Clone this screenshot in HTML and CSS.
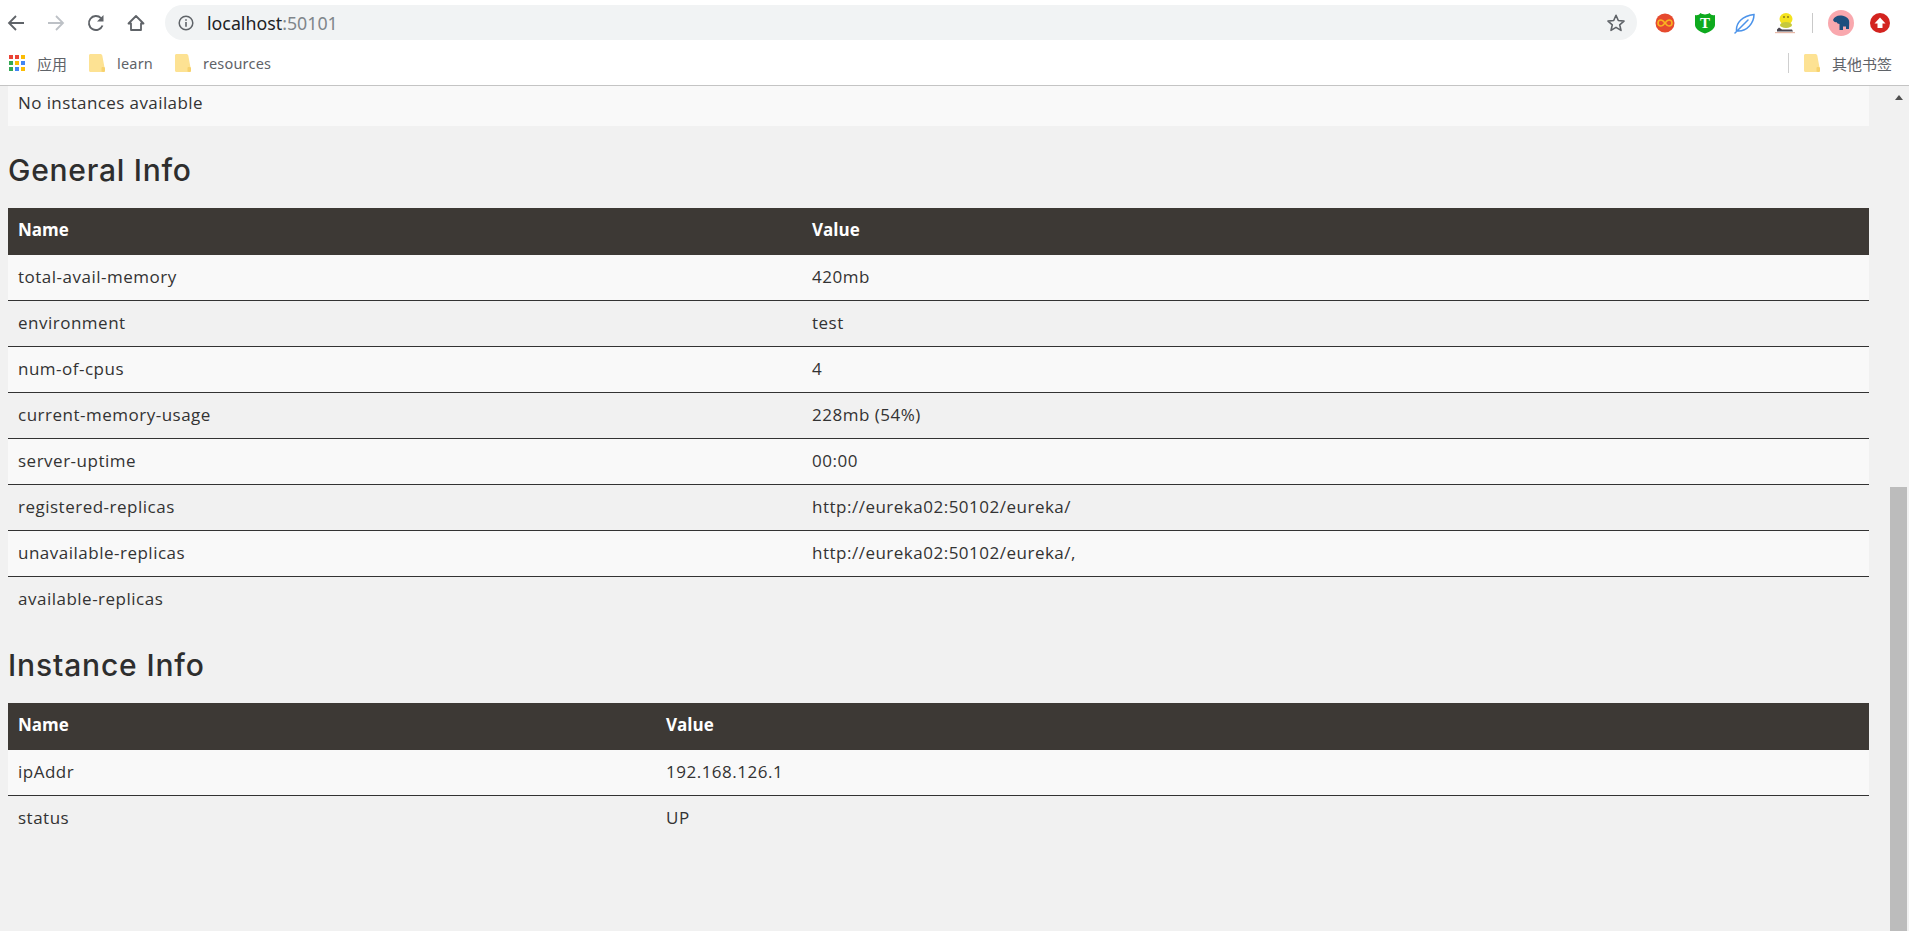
FILE: index.html
```html
<!DOCTYPE html>
<html lang="en">
<head>
<meta charset="utf-8">
<title>Eureka</title>
<link rel="stylesheet" href="styles.css">
</head>
<body>
<svg class="defs" width="0" height="0" aria-hidden="true">
  <symbol id="folder" viewBox="0 0 16 18">
    <path d="M1.500 0H11c1.500 0 2 .6 2.300 1.500L15.500 13.500c.3 1.500.5 2 .5 3s-.7 1.500-2 1.500H1.500C.6 18 0 17.400 0 16.500V1.500C0 .6.6 0 1.500 0Z" fill="#fde293"/>
    <path d="M12.500 17.500v-3.500c0-.8 1-1.200 1.800-1l1.700.5v3c0 1-.7 1.500-2 1.500Z" fill="#f7d26e"/>
  </symbol>
</svg>
<header class="chrome">
  <div class="toolbar">
    <button class="nav"><svg width="20" height="20" viewBox="0 0 20 20"><path d="M18 10H3M10 3l-7 7 7 7" fill="none" stroke="#5f6368" stroke-width="1.800"/></svg></button>
    <button class="nav"><svg width="20" height="20" viewBox="0 0 20 20"><path d="M2 10h15M10 3l7 7-7 7" fill="none" stroke="#bdc1c6" stroke-width="1.800"/></svg></button>
    <button class="nav"><svg width="20" height="20" viewBox="0 0 20 20"><path d="M16.500 12.500A7 7 0 1 1 15 5.200" fill="none" stroke="#5f6368" stroke-width="1.900"/><path d="M17.500 2v6.500H11Z" fill="#5f6368"/></svg></button>
    <button class="nav"><svg width="20" height="20" viewBox="0 0 20 20"><path d="M10 3 2.500 10.500H5V17h10v-6.500h2.500Z" fill="none" stroke="#5f6368" stroke-width="1.800" stroke-linejoin="round"/></svg></button>
    <div class="omnibox">
      <svg class="info" width="16" height="16" viewBox="0 0 16 16"><circle cx="8" cy="8" r="6.800" fill="none" stroke="#5f6368" stroke-width="1.500"/><path d="M7.200 7h1.600v4.800H7.200ZM7.200 4.200h1.600v1.600H7.200Z" fill="#5f6368"/></svg>
      <span class="url">localhost<span class="port">:50101</span></span>
      <svg class="star" width="20" height="20" viewBox="0 0 20 20"><path d="m10 2.300 2.300 5.200 5.700.6-4.300 3.700 1.300 5.600-5-3-5 3 1.300-5.600L2 8.100l5.700-.6Z" fill="none" stroke="#5f6368" stroke-width="1.600" stroke-linejoin="round"/></svg>
    </div>
    <div class="extensions">
      <span class="ext"><svg width="20" height="20" viewBox="0 0 20 20"><circle cx="10" cy="10" r="9.500" fill="#e64a2e"/><path d="M10 10c-1.500-2-2.600-3-4-3a3 3 0 0 0 0 6c1.400 0 2.500-1 4-3s2.600-3 4-3a3 3 0 0 1 0 6c-1.400 0-2.500-1-4-3Z" fill="none" stroke="#f9b320" stroke-width="1.600"/></svg></span>
      <span class="ext"><svg width="20" height="22" viewBox="0 0 20 22"><path d="M0 3c2.500.8 4-.2 5.500-2 1.500 1 2.800 1.400 4.500 1.400S13 2 14.500 1C16 2.800 17.500 3.800 20 3v10c0 3.500-4.500 7-10 8.500C4.500 20 0 16.500 0 13Z" fill="#0eaa1e"/><text class="shield-t" x="10" y="16" text-anchor="middle">T</text></svg></span>
      <span class="ext"><svg width="22" height="22" viewBox="0 0 22 22"><path d="M2.500 18.500C2 11 8 4 20 2.500 20 11 13 19 4.500 19ZM1 21 14 8" fill="none" stroke="#4b93ea" stroke-width="1.500" stroke-linecap="round"/></svg></span>
      <span class="ext"><svg width="22" height="24" viewBox="0 0 22 24"><ellipse cx="12" cy="8" rx="6.500" ry="6" fill="#f4e31f"/><ellipse cx="12" cy="14" rx="6" ry="3" fill="#c6c93c"/><path d="M3 18.500l2-2 3 2h10l1 2H3Z" fill="#4a4650"/><path d="M1 21h20v1.200H1Z" fill="#e6b8a8"/><circle cx="10" cy="6" r="1" fill="#8a7a20"/><circle cx="14" cy="6" r="1" fill="#8a7a20"/></svg></span>
      <span class="ext-sep"></span>
      <span class="ext avatar"><svg width="26" height="26" viewBox="0 0 26 26"><circle cx="13" cy="13" r="13" fill="#f9a8ae"/><path d="M5 10c1-3 4-4.500 7-4.500 4 0 8 1.500 9 5 .5 2 0 6 0 8.500h-3v-2.500h-3V20h-3.500v-6c-1.500 0-2.500-1-3-2-1 .5-2.500 0-3.500-2Z" fill="#1d4f7e"/></svg></span>
      <span class="ext"><svg width="20" height="20" viewBox="0 0 20 20"><circle cx="10" cy="10" r="10" fill="#d3231f"/><path d="M10 4.500 15.500 10.500H12.500V15h-5V10.500H4.500Z" fill="#fff"/></svg></span>
    </div>
  </div>
  <nav class="bookmarks">
    <svg class="apps" width="16" height="16" viewBox="0 0 16 16">
      <rect x="0" y="0" width="4" height="4" fill="#ea4335"/><rect x="6" y="0" width="4" height="4" fill="#ea4335"/><rect x="12" y="0" width="4" height="4" fill="#fbbc04"/>
      <rect x="0" y="6" width="4" height="4" fill="#34a853"/><rect x="6" y="6" width="4" height="4" fill="#fbbc04"/><rect x="12" y="6" width="4" height="4" fill="#4285f4"/>
      <rect x="0" y="12" width="4" height="4" fill="#34a853"/><rect x="6" y="12" width="4" height="4" fill="#4285f4"/><rect x="12" y="12" width="4" height="4" fill="#fbbc04"/>
    </svg>
    <span class="bm-label cjk">应用</span>
    <svg class="folder" width="16" height="18"><use href="#folder"/></svg>
    <span class="bm-label">learn</span>
    <svg class="folder" width="16" height="18"><use href="#folder"/></svg>
    <span class="bm-label">resources</span>
    <span class="bm-spacer"></span>
    <span class="bm-sep"></span>
    <svg class="folder other" width="16" height="18"><use href="#folder"/></svg>
    <span class="bm-label cjk">其他书签</span>
  </nav>
</header>
<div class="viewport">
  <main class="page">
    <div class="leftover">No instances available</div>
    <h1 class="title">General Info</h1>
    <table class="info-table general">
      <thead><tr><th class="name-col">Name</th><th>Value</th></tr></thead>
      <tbody>
        <tr><td>total-avail-memory</td><td>420mb</td></tr>
        <tr><td>environment</td><td>test</td></tr>
        <tr><td>num-of-cpus</td><td>4</td></tr>
        <tr><td>current-memory-usage</td><td>228mb (54%)</td></tr>
        <tr><td>server-uptime</td><td>00:00</td></tr>
        <tr><td>registered-replicas</td><td>http://eureka02:50102/eureka/</td></tr>
        <tr><td>unavailable-replicas</td><td>http://eureka02:50102/eureka/,</td></tr>
        <tr><td>available-replicas</td><td></td></tr>
      </tbody>
    </table>
    <h1 class="title second">Instance Info</h1>
    <table class="info-table instance">
      <thead><tr><th class="name-col">Name</th><th>Value</th></tr></thead>
      <tbody>
        <tr><td>ipAddr</td><td>192.168.126.1</td></tr>
        <tr><td>status</td><td>UP</td></tr>
      </tbody>
    </table>
  </main>
  <aside class="scrollbar">
    <span class="arrow-up"></span>
    <span class="thumb"></span>
  </aside>
</div>
</body>
</html>
```
FILE: styles.css
```css
* { box-sizing: border-box; }
html, body { margin: 0; height: 100%; overflow: hidden; }
body {
  display: flex;
  flex-direction: column;
  background: #f1f1f1;
  font-family: "Open Sans", "Noto Sans CJK SC", sans-serif;
  color: #333;
}
.defs { position: absolute; }
.chrome { background: #fff; border-bottom: 1px solid #c4c4c4; height: 86px; flex: none; }
.toolbar { display: flex; align-items: center; height: 44px; padding-top: 1px; gap: 8px; }
.nav { width: 32px; height: 32px; border: 0; padding: 0; background: none; display: flex; align-items: center; justify-content: center; }
.omnibox {
  flex: 1;
  height: 35px;
  margin-left: 5px;
  border-radius: 18px;
  background: #f1f3f4;
  display: flex;
  align-items: center;
  padding: 0 11px 0 13px;
}
.info { flex: none; }
.url { margin-left: 13px; font: 17.800px "Noto Sans", "Open Sans", sans-serif; color: #202124; }
.port { color: #80868b; }
.star { margin-left: auto; }
.extensions { display: flex; align-items: center; margin-right: 8px; width: 256px; }
.ext { width: 40px; display: flex; justify-content: center; align-items: center; }
.ext.avatar { padding-left: 2px; }
.ext-sep { width: 1px; height: 20px; background: #c9c9c9; margin: 0 7px; }
.shield-t { font: 700 15px "Liberation Serif", serif; fill: #fff; }
.bookmarks { display: flex; align-items: center; height: 41px; padding: 0 17px 3px 9px; }
.apps { flex: none; }
.bm-label { font: 14.500px "Noto Sans", "Open Sans", sans-serif; letter-spacing: .2px; color: #5f6368; margin-left: 12px; }
.cjk { font-family: "Noto Sans CJK SC", sans-serif; font-size: 15px; letter-spacing: 0; }
.folder { flex: none; margin-left: 22px; }
.folder.other { margin-left: 15px; }
.bm-spacer { flex: 1; }
.bm-sep { width: 1px; height: 20px; background: #cfcfcf; }
.viewport { flex: 1; display: flex; min-height: 0; }
.page { flex: 1; min-width: 0; padding: 0 21px 0 8px; overflow: hidden; }
.leftover { height: 40px; background: #f9f9f9; padding: 4px 10px 0; font-size: 17px; letter-spacing: .4px; line-height: 26px; color: #333; }
.title {
  font: 500 30px/36px "Inter", sans-serif;
  letter-spacing: .75px;
  color: #2e2e2e;
  margin: 26px 0 20px;
}
.title.second { margin: 25px 0 20px; letter-spacing: .85px; }
.info-table { width: 100%; border-collapse: collapse; font-size: 17px; }
.info-table th { background: #3d3935; color: #fff; text-align: left; font-weight: 700; height: 47px; padding: 0 10px 4px; }
.info-table td { height: 46px; padding: 0 10px 2px; border-top: 1px solid #333; letter-spacing: .5px; }
.info-table tbody tr:first-child td { border-top: 0; height: 45px; }
.info-table tbody tr:nth-child(odd) { background: #f9f9f9; }
.general .name-col { width: 794px; }
.instance .name-col { width: 648px; }
.scrollbar { flex: none; width: 19px; display: flex; flex-direction: column; align-items: center; padding-right: 2px; background: #f1f1f1; }
.arrow-up { flex: none; width: 0; height: 0; margin-top: 9px; border-left: 4.500px solid transparent; border-right: 4.500px solid transparent; border-bottom: 5px solid #505050; }
.thumb { margin-top: 387px; width: 17px; flex: 1; background: #bcbcbc; }
```
